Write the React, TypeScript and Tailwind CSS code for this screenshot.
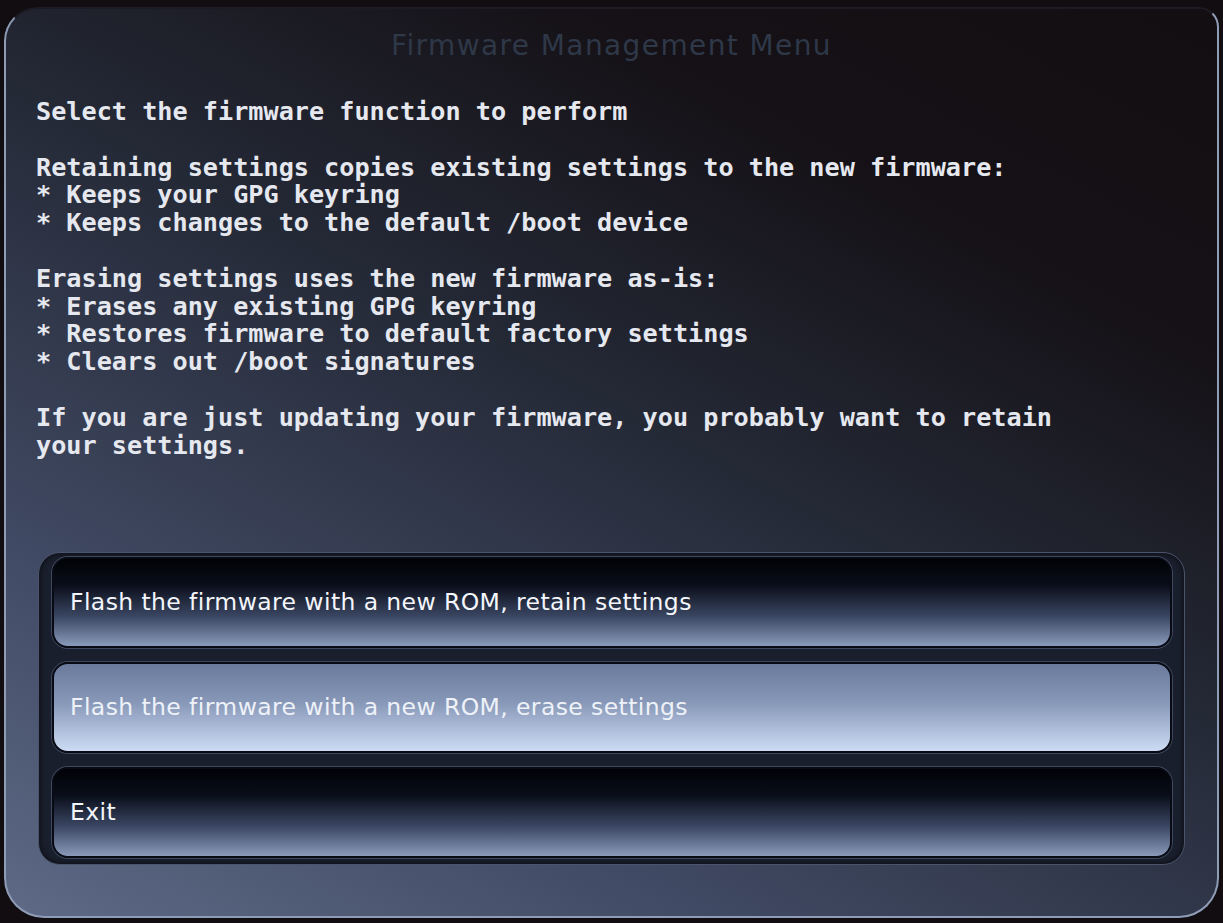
import React from 'react';

const bodyText = `Select the firmware function to perform

Retaining settings copies existing settings to the new firmware:
* Keeps your GPG keyring
* Keeps changes to the default /boot device

Erasing settings uses the new firmware as-is:
* Erases any existing GPG keyring
* Restores firmware to default factory settings
* Clears out /boot signatures

If you are just updating your firmware, you probably want to retain
your settings.`;

const items = [
  { label: 'Flash the firmware with a new ROM, retain settings', selected: false },
  { label: 'Flash the firmware with a new ROM, erase settings', selected: true },
  { label: 'Exit', selected: false },
];

function MenuButton({ label, selected }: { label: string; selected: boolean }) {
  return (
    <div
      className={`flex h-[91px] items-center rounded-[16px] border-2 border-[#080b14] pl-[16px] ring-1 ring-[#3e485e] ${
        selected
          ? 'bg-[linear-gradient(to_bottom,#6a7a9c_0%,#8898b8_45%,#cddcf4_100%)] text-[#eef2f8]'
          : 'bg-[linear-gradient(to_bottom,#010206_0%,#0a0e1a_30%,#3a4662_66%,#8a9aba_100%)] text-[#f4f6fb]'
      }`}
    >
      <span className="font-['DejaVu_Sans',sans-serif] text-[23.5px] tracking-[0.4px]">{label}</span>
    </div>
  );
}

export default function App() {
  return (
    <div className="h-[923px] w-[1223px] overflow-hidden bg-[#110d10] px-[4px] pt-[7px] pb-[5px]">
      <div className="flex h-full flex-col rounded-tl-[34px] rounded-tr-[20px] rounded-b-[40px] border-2 border-[#8e9cb6] border-t-[#1c1a22] bg-[linear-gradient(28deg,#5e6a86_0%,#414a64_24%,#242936_54%,#151116_78%,#130e11_100%)]">
        {/* title */}
        <div className="pt-[20px] text-center font-['DejaVu_Sans',sans-serif] text-[28px] leading-[34px] tracking-[1.4px] text-[#2e3848]">
          Firmware Management Menu
        </div>

        {/* message body */}
        <pre className="mt-[35px] pl-[30px] font-['DejaVu_Sans_Mono',monospace] text-[25.2px] font-bold leading-[27.8px] whitespace-pre text-[#e6e8ef]">
          {bodyText}
        </pre>

        {/* menu */}
        <div className="mt-auto mb-[51px] ml-[32px] mr-[32px] flex flex-col gap-[14px] rounded-[22px] border border-[#4a546a] bg-[#1a1f2d] pt-[4px] pr-[12px] pb-[6px] pl-[13px] shadow-[inset_0_0_6px_rgba(0,0,0,0.7)]">
          {items.map((item) => (
            <MenuButton key={item.label} label={item.label} selected={item.selected} />
          ))}
        </div>
      </div>
    </div>
  );
}
